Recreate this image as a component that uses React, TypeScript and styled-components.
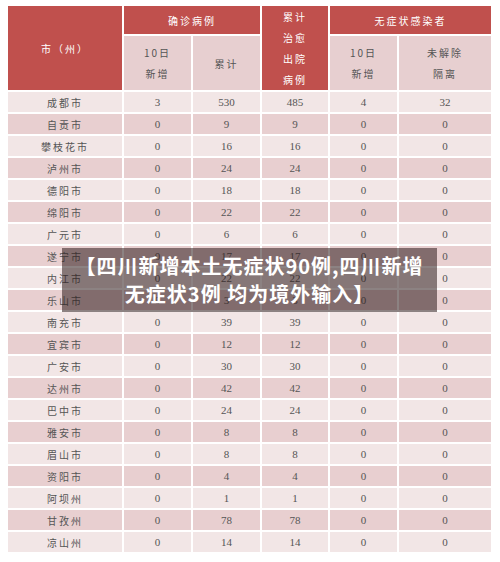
import styled, { createGlobalStyle } from "styled-components";

const GlobalStyle = createGlobalStyle`
  body {
    margin: 0;
    background: #ffffff;
    font-family: "Liberation Serif", "Noto Sans CJK SC", serif;
  }
`;

const Page = styled.div`
  padding: 5px 0 0 7px;
`;

const Frame = styled.div`
  position: relative;
  width: 485px;
`;

const Table = styled.table`
  width: 485px;
  table-layout: fixed;
  border-collapse: separate;
  border-spacing: 0;
`;

const HeadCell = styled.th<{ $tone?: "red" | "pink"; $h: number }>`
  box-sizing: border-box;
  height: ${(p) => p.$h}px;
  padding: 0;
  border: 1px solid #ffffff;
  background: ${(p) => (p.$tone === "pink" ? "#e7cfd0" : "#c0504d")};
  color: ${(p) => (p.$tone === "pink" ? "#555555" : "#ffffff")};
  font-family: "Noto Sans CJK SC", sans-serif;
  font-weight: 400;
  font-size: 10px;
  letter-spacing: 2px;
  line-height: 21px;
  text-align: center;
  vertical-align: middle;
`;

const Row = styled.tr<{ $dark: boolean }>`
  background: ${(p) => (p.$dark ? "#e8cfd0" : "#f2e6e6")};
`;

const Cell = styled.td<{ $cjk?: boolean }>`
  box-sizing: border-box;
  height: 22px;
  padding: 0;
  border: 1px solid #ffffff;
  color: #555555;
  text-align: center;
  vertical-align: middle;
  font-family: ${(p) =>
    p.$cjk ? `"Noto Sans CJK SC", sans-serif` : `"Liberation Serif", serif`};
  font-size: ${(p) => (p.$cjk ? "10px" : "11px")};
  letter-spacing: ${(p) => (p.$cjk ? "2px" : "0")};
`;

const Caption = styled.div`
  position: absolute;
  left: 55px;
  top: 243px;
  width: 375px;
  height: 64px;
  background: rgba(45, 28, 28, 0.55);
  color: #ffffff;
  font-family: "Noto Sans CJK SC", sans-serif;
  font-weight: 700;
  font-size: 20px;
  letter-spacing: 1px;
  line-height: 28px;
  text-align: center;
  display: flex;
  flex-direction: column;
  justify-content: center;
`;

const rows: [string, number, number, number, number, number][] = [
  ["成都市", 3, 530, 485, 4, 32],
  ["自贡市", 0, 9, 9, 0, 0],
  ["攀枝花市", 0, 16, 16, 0, 0],
  ["泸州市", 0, 24, 24, 0, 0],
  ["德阳市", 0, 18, 18, 0, 0],
  ["绵阳市", 0, 22, 22, 0, 0],
  ["广元市", 0, 6, 6, 0, 0],
  ["遂宁市", 0, 17, 17, 0, 0],
  ["内江市", 0, 22, 22, 0, 0],
  ["乐山市", 0, 3, 3, 0, 0],
  ["南充市", 0, 39, 39, 0, 0],
  ["宜宾市", 0, 12, 12, 0, 0],
  ["广安市", 0, 30, 30, 0, 0],
  ["达州市", 0, 42, 42, 0, 0],
  ["巴中市", 0, 24, 24, 0, 0],
  ["雅安市", 0, 8, 8, 0, 0],
  ["眉山市", 0, 8, 8, 0, 0],
  ["资阳市", 0, 4, 4, 0, 0],
  ["阿坝州", 0, 1, 1, 0, 0],
  ["甘孜州", 0, 78, 78, 0, 0],
  ["凉山州", 0, 14, 14, 0, 0],
];

export default function App() {
  return (
    <Page>
      <GlobalStyle />
      <Frame>
        <Table>
          <colgroup>
            <col style={{ width: 116 }} />
            <col style={{ width: 69 }} />
            <col style={{ width: 69 }} />
            <col style={{ width: 68 }} />
            <col style={{ width: 69 }} />
            <col style={{ width: 94 }} />
          </colgroup>
          <thead>
            <tr>
              <HeadCell rowSpan={2} $h={86}>
                市（州）
              </HeadCell>
              <HeadCell colSpan={2} $h={30}>
                确诊病例
              </HeadCell>
              <HeadCell rowSpan={2} $h={86}>
                累计
                <br />
                治愈
                <br />
                出院
                <br />
                病例
              </HeadCell>
              <HeadCell colSpan={2} $h={30}>
                无症状感染者
              </HeadCell>
            </tr>
            <tr>
              <HeadCell $tone="pink" $h={56}>
                10日
                <br />
                新增
              </HeadCell>
              <HeadCell $tone="pink" $h={56}>
                累计
              </HeadCell>
              <HeadCell $tone="pink" $h={56}>
                10日
                <br />
                新增
              </HeadCell>
              <HeadCell $tone="pink" $h={56}>
                未解除
                <br />
                隔离
              </HeadCell>
            </tr>
          </thead>
          <tbody>
            {rows.map((r, i) => (
              <Row key={r[0]} $dark={i % 2 === 1}>
                <Cell $cjk>{r[0]}</Cell>
                <Cell>{r[1]}</Cell>
                <Cell>{r[2]}</Cell>
                <Cell>{r[3]}</Cell>
                <Cell>{r[4]}</Cell>
                <Cell>{r[5]}</Cell>
              </Row>
            ))}
          </tbody>
        </Table>
        <Caption>
          <span>【四川新增本土无症状90例,四川新增</span>
          <span>无症状3例 均为境外输入】</span>
        </Caption>
      </Frame>
    </Page>
  );
}
